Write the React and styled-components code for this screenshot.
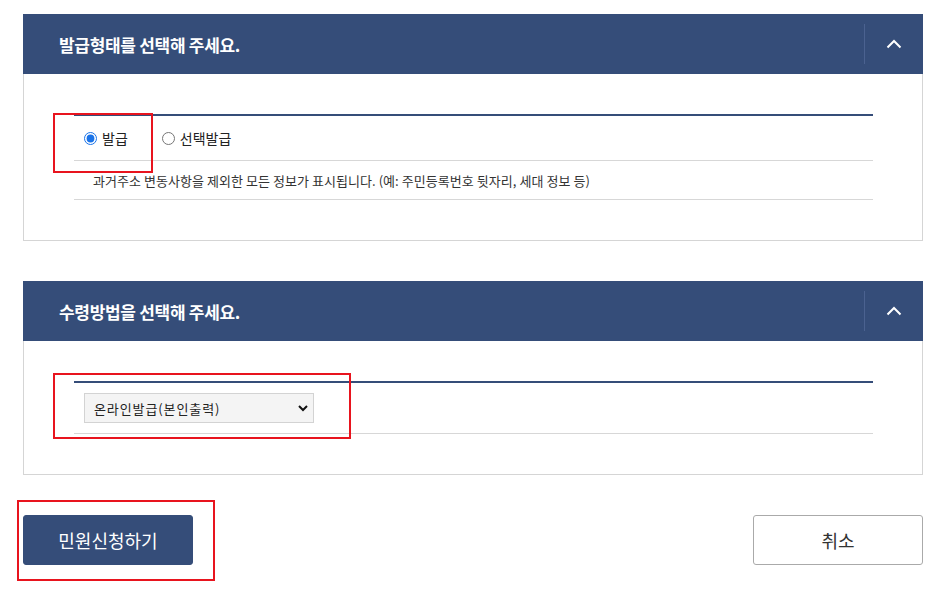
import React from 'react';
import styled, { createGlobalStyle } from 'styled-components';

const GlobalStyle = createGlobalStyle`
  body {
    margin: 0;
    background: #fff;
    font-family: 'Noto Sans CJK KR', 'Noto Sans', sans-serif;
    color: #333;
  }
`;

const Page = styled.div`
  position: relative;
  width: 900px;
  padding: 14px 0 25px 23px;
  display: flex;
  flex-direction: column;
  gap: 40px;
`;

const Panel = styled.section`
  border: 1px solid #d5d5d5;
  border-top: none;
`;

const PanelHeader = styled.div`
  height: 60px;
  margin: 0 -1px;
  background: #354d79;
  display: flex;
  align-items: center;
  justify-content: space-between;
`;

const PanelTitle = styled.h2`
  margin: 0 0 0 36px;
  font-size: 17px;
  font-weight: 700;
  letter-spacing: -0.3px;
  color: #fff;
`;

const ToggleButton = styled.button`
  height: 40px;
  width: 59px;
  border: none;
  border-left: 1px solid #4b6290;
  background: transparent;
  display: flex;
  align-items: center;
  justify-content: center;
  padding: 0;
  cursor: pointer;
`;

const PanelBody = styled.div`
  padding: 40px 49px 40px 50px;
`;

const Table = styled.div`
  border-top: 2px solid #354d79;
`;

const Row = styled.div`
  position: relative;
  display: flex;
  align-items: center;
  gap: 34px;
  height: ${(p) => p.$height}px;
  padding-left: ${(p) => p.$indent}px;
  border-bottom: 1px solid #d7d7d7;
`;

const RadioLabel = styled.label`
  display: flex;
  align-items: center;
  gap: 5px;
  font-size: 14px;
  color: #222;
  cursor: pointer;

  input {
    margin: 0;
    width: 13px;
    height: 13px;
    accent-color: #1a73e8;
  }
`;

const Description = styled.p`
  margin: 0;
  font-size: 13px;
  letter-spacing: 0.05px;
  color: #333;
`;

const SelectWrap = styled.div`
  position: relative;
  width: 230px;
  height: 30px;
`;

const Select = styled.select`
  appearance: none;
  width: 100%;
  height: 100%;
  border: 1px solid #d3d3d3;
  background: #f4f4f4;
  padding: 0 30px 0 9px;
  font-family: 'Noto Sans CJK KR', sans-serif;
  font-size: 13px;
  letter-spacing: 0.9px;
  color: #222;
  outline: none;
`;

const SelectArrow = styled.svg`
  position: absolute;
  right: 6px;
  top: 11px;
  pointer-events: none;
`;

const Highlight = styled.div`
  position: absolute;
  border: 2px solid #e8141e;
  top: ${(p) => p.$top}px;
  left: ${(p) => p.$left}px;
  width: ${(p) => p.$width}px;
  height: ${(p) => p.$height}px;
  box-sizing: border-box;
  pointer-events: none;
`;

const Actions = styled.div`
  position: relative;
  display: flex;
  justify-content: space-between;
`;

const ActionButton = styled.button`
  width: 170px;
  height: 50px;
  border-radius: 3px;
  font-family: 'Noto Sans CJK KR', sans-serif;
  font-size: 18px;
  font-weight: 400;
  cursor: pointer;
  border: 1px solid ${(p) => (p.$primary ? '#354d79' : '#aaa')};
  background: ${(p) => (p.$primary ? '#354d79' : '#fff')};
  color: ${(p) => (p.$primary ? '#fff' : '#333')};
`;

const ChevronUp = () => (
  <svg width="16" height="10" viewBox="0 0 16 10">
    <path d="M1.5 8.5 L8 2 L14.5 8.5" fill="none" stroke="#fff" strokeWidth="2" />
  </svg>
);

const SectionPanel = ({ title, children }) => (
  <Panel>
    <PanelHeader>
      <PanelTitle>{title}</PanelTitle>
      <ToggleButton aria-label="접기">
        <ChevronUp />
      </ToggleButton>
    </PanelHeader>
    <PanelBody>
      <Table>{children}</Table>
    </PanelBody>
  </Panel>
);

export default function App() {
  return (
    <>
      <GlobalStyle />
      <Page>
        <SectionPanel title="발급형태를 선택해 주세요.">
          <Row $height={44} $indent={10}>
            <Highlight $top={-3} $left={-21} $width={100} $height={60} />
            <RadioLabel>
              <input type="radio" name="type" defaultChecked />
              발급
            </RadioLabel>
            <RadioLabel>
              <input type="radio" name="type" />
              선택발급
            </RadioLabel>
          </Row>
          <Row $height={38} $indent={19}>
            <Description>
              과거주소 변동사항을 제외한 모든 정보가 표시됩니다. (예: 주민등록번호 뒷자리, 세대 정보 등)
            </Description>
          </Row>
        </SectionPanel>

        <SectionPanel title="수령방법을 선택해 주세요.">
          <Row $height={50} $indent={10}>
            <Highlight $top={-10} $left={-21} $width={298} $height={66} />
            <SelectWrap>
              <Select defaultValue="online">
                <option value="online">온라인발급(본인출력)</option>
              </Select>
              <SelectArrow width="10" height="8" viewBox="0 0 10 8">
                <path d="M1 2 L5 6 L9 2" fill="none" stroke="#111" strokeWidth="2" />
              </SelectArrow>
            </SelectWrap>
          </Row>
        </SectionPanel>

        <Actions>
          <Highlight $top={-15} $left={-6} $width={198} $height={81} />
          <ActionButton $primary>민원신청하기</ActionButton>
          <ActionButton>취소</ActionButton>
        </Actions>
      </Page>
    </>
  );
}
